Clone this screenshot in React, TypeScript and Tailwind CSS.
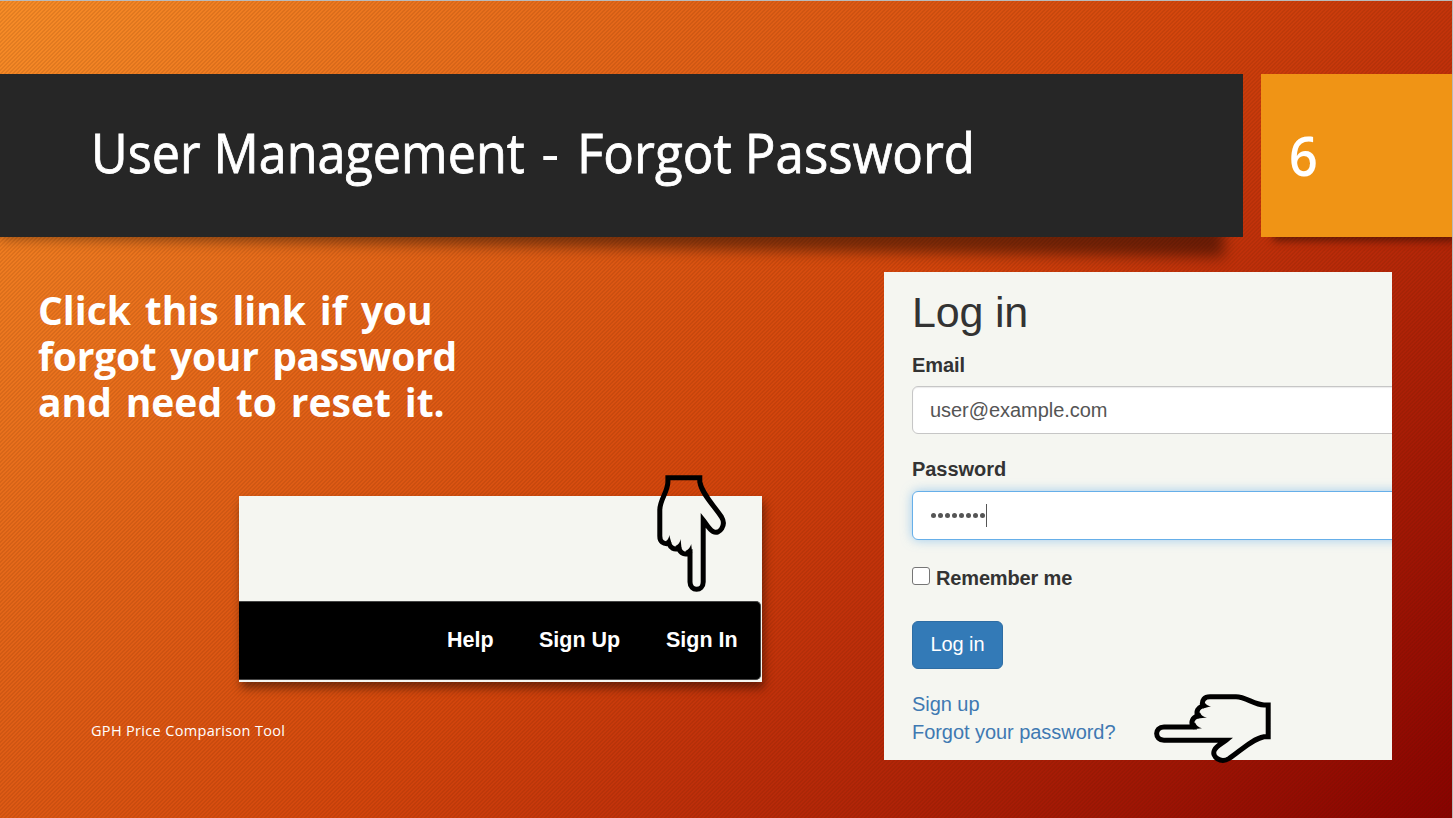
import React from "react";

function Hand({ className }: { className: string }) {
  return (
    <svg className={className} viewBox="0 0 118 72" fill="none" stroke="#000" strokeWidth="5">
      <path d="M11 34 H40 C37.5 29 39.5 24.5 44.5 23 C43 18 45 14.5 49.5 13 C48.5 7 51.5 3.8 57 3.8 H83 C93 3.8 101 11.7 111 11.9 H115.2 V43.8 H111 C99 46 88 57.5 76 65.5 C68 70.5 58 64 61.5 57 C63.5 53 69 50.5 73 47.2 H11 C1.2 47.2 1.2 34 11 34 Z" />
      <path d="M38 31 L42 29.5 Q44 34 49 35.2 L40 36.2 Z M43 21 L47 19.5 Q49 24 54 24.6 L45 25.5 Z M48.5 11.5 L52 10 Q54 13 58 13.2 L50 15.4 Z" fill="#000" stroke="none" />
    </svg>
  );
}

export default function App() {
  return (
    <main className="relative h-[818px] w-[1453px] overflow-hidden border-t border-r border-[#b9b9b9] bg-[linear-gradient(137deg,#f78c27_0%,#d3450c_52%,#c0300a_65%,#880200_100%)] font-['Open_Sans',sans-serif] text-white">
      <div className="flex h-full flex-col bg-[linear-gradient(135deg,rgba(70,30,0,0.11)_25%,transparent_25%,transparent_50%,rgba(70,30,0,0.11)_50%,rgba(70,30,0,0.11)_75%,transparent_75%)] bg-[length:4px_4px] pt-[73px]">
        <header className="relative flex h-[163px] shrink-0 gap-[18px]">
          <div className="absolute top-[40px] left-0 h-[143px] w-[1224px] blur-[7px]">
            <div className="h-full w-full bg-black/45 [clip-path:polygon(0_0,100%_0,100%_100%,75%_97%,0_86%)]" />
          </div>
          <div className="relative flex w-[1243px] items-center bg-[#262626] pb-[5px] pl-[91px]">
            <h1 className="flex text-[54.5px] whitespace-nowrap [-webkit-text-stroke:0.8px_white]">
              <span className="w-[451px] origin-left scale-x-[0.923]">User Management</span>
              <span className="w-[35px] origin-left scale-x-[0.6] [-webkit-text-stroke:0]">–</span>
              <span className="origin-left scale-x-[0.937]">Forgot Password</span>
            </h1>
          </div>
          <div className="relative flex w-[191px] items-center bg-[#f09415] pl-[28px] shadow-[8px_8px_8px_-4px_rgba(0,0,0,0.45)]">
            <span className="origin-left scale-x-[0.93] text-[54px] font-semibold">6</span>
          </div>
        </header>
        <div className="flex pt-[35px]">
          <section className="flex h-[520px] w-[884px] flex-col">
            <h2 className="pt-[15px] pl-[38px] text-[39px] leading-[46px] font-bold [word-spacing:3.7px]">
              <span className="block">Click this link if you</span>
              <span className="block tracking-[-0.27px]">forgot your password</span>
              <span className="block">and need to reset it.</span>
            </h2>
            <div className="relative mt-[71px] ml-[239px] flex h-[186px] w-[523px] flex-col bg-[#f5f6f1] pt-[105px] shadow-[2px_6px_9px_rgba(0,0,0,0.45)]">
              <nav className="flex h-[79px] w-[522px] items-center rounded-r-[5px] border border-l-0 border-[#444] bg-black font-['Liberation_Sans',sans-serif] text-[21.5px] font-bold">
                <span className="ml-[208px] w-[92px]">Help</span>
                <span className="w-[127px]">Sign Up</span>
                <span>Sign In</span>
              </nav>
              <Hand className="absolute top-[2px] left-[394px] h-[72px] w-[118px] -rotate-90" />
            </div>
            <footer className="mt-[38px] pl-[91px] text-[14.5px] leading-[22px] tracking-[0.33px]">GPH Price Comparison Tool</footer>
          </section>
          <section className="relative h-[488px] w-[508px] bg-[#f5f6f1] font-['Liberation_Sans',sans-serif] text-[20px] tracking-[-0.05px] text-[#333]">
            <div className="flex h-full flex-col overflow-hidden pl-[28px]">
              <h3 className="mt-[15px] h-[52px] text-[43px] leading-[50px] tracking-[-0.2px]">Log in</h3>
              <label className="mt-[12px] h-[28px] leading-[28px] font-bold">Email</label>
              <div className="mt-[7px] flex h-[48px] w-[500px] shrink-0 items-center rounded-[6px] border border-[#c6c6c6] bg-white pl-[17px] text-[#555] shadow-[inset_0_1px_1px_rgba(0,0,0,0.08)]">user@example.com</div>
              <label className="mt-[21px] h-[28px] leading-[28px] font-bold">Password</label>
              <div className="mt-[8px] flex h-[49px] w-[500px] shrink-0 items-center rounded-[6px] border border-[#66afe9] bg-white pl-[18px] shadow-[0_0_11px_rgba(102,175,233,0.6)]">
                <div className="flex gap-[2px]">
                  {Array.from({ length: 8 }, (_, i) => <i key={i} className="size-[5px] rounded-full bg-[#555]" />)}
                </div>
                <i className="ml-px h-[23px] w-px bg-[#555]" />
              </div>
              <div className="mt-[23px] flex h-[30px] items-center gap-[6px] font-bold tracking-[-0.15px]"><i className="mb-[4px] size-[18px] rounded-[3px] border border-[#767676] bg-white" />Remember me</div>
              <button className="mt-[28px] h-[48px] w-[91px] shrink-0 rounded-[6px] border border-[#2e6da4] bg-[#337ab7] pb-[2px] text-white">Log in</button>
              <div className="mt-[21px] flex flex-col text-[#4079b2] leading-[28px]"><a>Sign up</a><a>Forgot your password?</a></div>
            </div>
            <Hand className="absolute top-[421px] left-[269px] h-[72px] w-[118px]" />
          </section>
        </div>
      </div>
    </main>
  );
}
